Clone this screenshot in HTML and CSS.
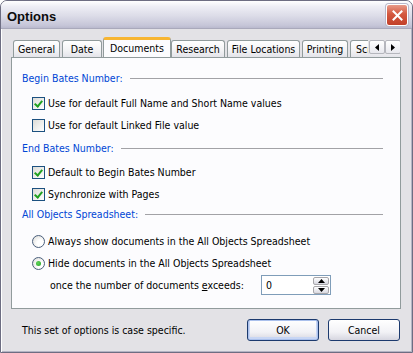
FILE: index.html
```html
<!DOCTYPE html>
<html lang="en">
  <head>
    <meta charset="UTF-8" />
    <meta name="viewport" content="width=device-width, initial-scale=1.0" />
    <title>Options</title>
    <link rel="stylesheet" href="styles.css">
  </head>
  <body>
    <div class="window">
      <div class="titlebar">
        <span class="title">Options</span>
        <button class="close" aria-label="Close">
          <svg width="11" height="11" viewBox="0 0 11 11">
            <path d="M1.5 1.5 L9.5 9.5 M9.5 1.5 L1.5 9.5" stroke="#fff" stroke-width="2" stroke-linecap="square" />
          </svg>
        </button>
      </div>

      <div class="content">
        <div class="tabs">
          <div class="tab tab-general">General</div>
          <div class="tab tab-date">Date</div>
          <div class="tab tab-documents active">Documents</div>
          <div class="tab tab-research">Research</div>
          <div class="tab tab-locations">File Locations</div>
          <div class="tab tab-printing">Printing</div>
          <div class="tab tab-more">Screen</div>
          <div class="tab-scroll">
            <span class="scroll-btn">
              <svg width="4" height="7" viewBox="0 0 4 7"><path d="M4 0 L0 3.5 L4 7 Z" fill="#000" /></svg>
            </span>
            <span class="scroll-btn">
              <svg width="4" height="7" viewBox="0 0 4 7"><path d="M0 0 L4 3.5 L0 7 Z" fill="#000" /></svg>
            </span>
          </div>
        </div>

        <div class="panel">
          <div class="group-head"><span>Begin Bates Number:</span></div>
          <div class="option gap-7">
            <span class="checkbox checked"></span>Use for default Full Name and Short Name values
          </div>
          <div class="option">
            <span class="checkbox"></span>Use for default Linked File value
          </div>

          <div class="group-head gap-5"><span>End Bates Number:</span></div>
          <div class="option gap-6">
            <span class="checkbox checked"></span>Default to Begin Bates Number
          </div>
          <div class="option">
            <span class="checkbox checked"></span>Synchronize with Pages
          </div>

          <div class="group-head gap-2"><span>All Objects Spreadsheet:</span></div>
          <div class="option gap-9">
            <span class="radio"></span>Always show documents in the All Objects Spreadsheet
          </div>
          <div class="option">
            <span class="radio selected"></span>Hide documents in the All Objects Spreadsheet
          </div>
          <div class="option sub">
            <span class="sub-label">once the number of documents <u>e</u>xceeds:</span>
            <div class="spin">
              <span class="spin-value">0</span>
              <span class="spin-btns">
                <span class="spin-btn">
                  <svg width="7" height="4" viewBox="0 0 7 4"><path d="M0 4 L3.5 0 L7 4 Z" fill="#000" /></svg>
                </span>
                <span class="spin-btn">
                  <svg width="7" height="4" viewBox="0 0 7 4"><path d="M0 0 L3.5 4 L7 0 Z" fill="#000" /></svg>
                </span>
              </span>
            </div>
          </div>
        </div>

        <div class="footer">
          <span class="note">This set of options is case specific.</span>
          <button class="btn default">OK</button>
          <button class="btn">Cancel</button>
        </div>
      </div>
    </div>
  </body>
</html>
```

FILE: styles.css
```css
* {
  box-sizing: border-box;
}

body {
  margin: 0;
  font-family: "DejaVu Sans Condensed", "DejaVu Sans", "Liberation Sans", sans-serif;
  font-size: 10.5px;
  color: #000;
  background: #ffffff;
}

.window {
  width: 413px;
  height: 353px;
  display: flex;
  flex-direction: column;
  background: #e3e2e6;
  border: 1px solid #6d6d82;
  border-radius: 7px 7px 0 0;
  padding: 0 3px 3px;
  box-shadow: inset 1px 0 0 #ffffff, inset -1px -1px 0 #b4b4c4;
}

/* title bar */
.titlebar {
  height: 28px;
  margin: 0 -3px;
  padding: 0 3px 0 6px;
  display: flex;
  align-items: center;
  justify-content: space-between;
  border-radius: 6px 6px 0 0;
  background: linear-gradient(#ffffff 0%, #eeeef5 20%, #dcdce8 55%, #c6c6d8 90%, #babace 100%);
  border-bottom: 1px solid #a9a9bb;
}

.title {
  font-family: "Liberation Sans", sans-serif;
  font-weight: bold;
  font-size: 13px;
  color: #0c0c0c;
  padding-top: 3px;
}

.close {
  width: 22px;
  height: 22px;
  margin-right: 1px;
  margin-top: 1px;
  padding: 0;
  display: flex;
  align-items: center;
  justify-content: center;
  border: 1px solid #ffffff;
  border-radius: 3px;
  background: linear-gradient(#e89a88, #d4583f 45%, #c2402a);
  box-shadow: 0 0 0 1px #b8b8ca;
}

.content {
  flex: 1;
  display: flex;
  flex-direction: column;
}

/* tabs */
.tabs {
  position: relative;
  display: flex;
  align-items: flex-end;
  height: 20px;
  margin: 8px 0 0 9px;
  width: 387px;
  overflow: hidden;
}

.tab {
  flex: none;
  height: 17px;
  padding-top: 2px;
  margin-right: 2px;
  text-align: center;
  white-space: nowrap;
  border: 1px solid #919b9c;
  border-bottom: none;
  border-radius: 3px 3px 0 0;
  background: linear-gradient(#ffffff, #f2f2f4 60%, #e4e4ea);
}

.tab-general { width: 47px; }
.tab-date { width: 40px; margin-right: 1px; }
.tab-research { width: 54px; }
.tab-locations { width: 73px; }
.tab-printing { width: 46px; }
.tab-more { width: 60px; text-align: left; padding-left: 5px; }

.tab.active {
  width: 68px;
  height: 21px;
  margin-right: 0;
  margin-bottom: -1px;
  padding-top: 2px;
  background: #fcfcfe;
  border-top: 3px solid #f7b532;
  position: relative;
  z-index: 1;
}

.tab-scroll {
  position: absolute;
  left: 355px;
  top: 3px;
  display: flex;
  background: #e3e2e6;
  padding-left: 1px;
}

.scroll-btn {
  width: 16px;
  height: 14px;
  display: flex;
  align-items: center;
  justify-content: center;
  border: 1px solid #b5b6bd;
  border-radius: 2px;
  background: linear-gradient(#ffffff, #e8e8ee);
}

/* panel */
.panel {
  height: 252px;
  margin: 0 8px 0 7px;
  padding: 13px 17px 0 10px;
  background: #fcfcfe;
  border: 1px solid #919b9c;
}

.group-head {
  display: flex;
  align-items: center;
  height: 14px;
  color: #0046d5;
}

.group-head::after {
  content: "";
  flex: 1;
  height: 1px;
  margin-left: 7px;
  background: #a2a2a6;
}

.gap-2 { margin-top: 2px; }
.gap-5 { margin-top: 5px; }
.gap-6 { margin-top: 6px; }
.gap-7 { margin-top: 7px; }
.gap-9 { margin-top: 9px; }

.option {
  display: flex;
  align-items: center;
  height: 22px;
  padding-left: 10px;
  white-space: nowrap;
}

.checkbox {
  width: 13px;
  height: 13px;
  margin-right: 3px;
  border: 1px solid #1c5180;
  background: linear-gradient(135deg, #dcdcd7, #ffffff);
  position: relative;
}

.checkbox.checked::after {
  content: "";
  position: absolute;
  left: 3px;
  top: 1px;
  width: 3px;
  height: 6px;
  border: solid #21a121;
  border-width: 0 2px 2px 0;
  transform: rotate(40deg);
}

.radio {
  width: 13px;
  height: 13px;
  margin-right: 3px;
  border: 1px solid #4a5f7c;
  border-radius: 50%;
  background: radial-gradient(circle at 65% 65%, #ffffff 30%, #d8d8d4 100%);
  display: flex;
  align-items: center;
  justify-content: center;
}

.radio.selected::after {
  content: "";
  width: 5px;
  height: 5px;
  border-radius: 50%;
  background: radial-gradient(circle at 40% 40%, #62d45c, #21a121);
}

.option.sub {
  padding-left: 28px;
}

.sub-label {
  width: 211px;
}

.spin {
  width: 70px;
  height: 20px;
  display: flex;
  align-items: center;
  justify-content: space-between;
  padding: 0 1px 0 4px;
  border: 1px solid #7f9db9;
  background: #ffffff;
}

.spin-btns {
  display: flex;
  flex-direction: column;
  gap: 1px;
}

.spin-btn {
  width: 16px;
  height: 8px;
  display: flex;
  align-items: center;
  justify-content: center;
  border: 1px solid #a7a6aa;
  border-radius: 2px;
  background: linear-gradient(#ffffff, #d8d8e0);
}

/* footer */
.footer {
  flex: 1;
  display: flex;
  align-items: center;
  padding: 2px 9px 0 18px;
}

.note {
  flex: 1;
}

.btn {
  width: 72px;
  height: 22px;
  margin-left: 9px;
  font: inherit;
  color: #000;
  border: 1px solid #1c3a6e;
  border-radius: 3px;
  background: linear-gradient(#ffffff, #f2f2f6 60%, #d6d6e0);
}

.btn.default {
  box-shadow: inset 0 0 0 1px #aac0ec, inset 0 -1px 0 2px #c8d6f4;
}
```
